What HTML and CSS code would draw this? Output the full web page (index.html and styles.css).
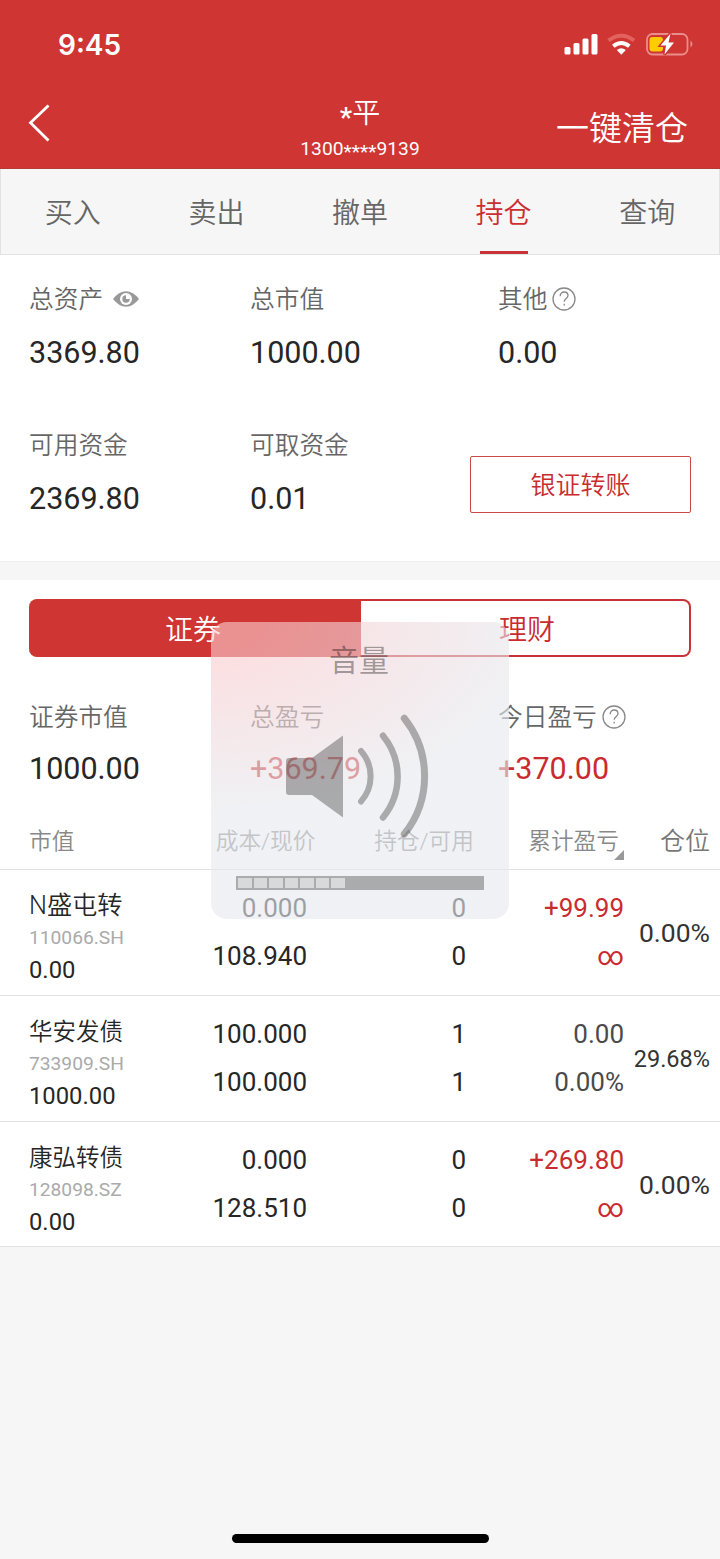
FILE: index.html
```html
<!DOCTYPE html>
<html lang="zh-CN">
<head>
<meta charset="utf-8">
<title>持仓</title>
<link rel="stylesheet" href="styles.css">
</head>
<body>
<div class="screen">
  <header class="top">
    <div class="status">
      <span class="clock">9:45</span>
      <svg class="status-icons" width="130" height="24" viewBox="0 0 130 24">
        <g fill="#fff">
          <rect x="1.5" y="15" width="6" height="7.5" rx="1.5"/><rect x="10.5" y="11" width="6" height="11.500" rx="1.500"/><rect x="19.500" y="6.500" width="6" height="16" rx="1.500"/><rect x="28.500" y="2" width="6" height="20.500" rx="1.500"/>
          <path d="M53.800 18Q58.300 14.700 62.800 18L58.300 22.800Z"/>
        </g>
        <path d="M50.300 14.300Q58.300 7.800 66.300 14.300" fill="none" stroke="#fff" stroke-width="4"/>
        <path d="M45.500 8.500Q58.300-1 71.100 8.500" fill="none" stroke="#e2625d" stroke-width="4"/>
        <rect x="84" y="2" width="40.500" height="20.500" rx="5.500" fill="none" stroke="#e98e8b" stroke-width="1.800"/>
        <path d="M127.500 8.500Q131.500 12 127.500 15.500Z" fill="#e98e8b"/>
        <rect x="86.500" y="5" width="13.500" height="14.500" rx="3" fill="#fc0"/>
        <path d="M107.500 1.500L97.500 13.500H103L101.500 22.500L111 10.500H105.500Z" fill="#fff" stroke="#cf3533" stroke-width="3" paint-order="stroke"/>
      </svg>
    </div>
    <div class="nav">
      <svg class="back" width="24" height="40" viewBox="0 0 24 40"><path d="M20.500 2.500L2.500 19.800L20.500 37.500" fill="none" stroke="#fff" stroke-width="2.800"/></svg>
      <div class="account"><div class="owner"><i>*</i>平</div><div class="number">1300<i>****</i>9139</div></div>
      <div class="clear-all">一键清仓</div>
    </div>
  </header>

  <nav class="tabs">
    <span class="tab">买入</span><span class="tab">卖出</span><span class="tab">撤单</span><span class="tab active">持仓</span><span class="tab">查询</span>
  </nav>

  <section class="assets">
    <div class="stat"><div class="label">总资产
      <svg class="eye" width="26" height="16" viewBox="0 0 26 16"><path d="M0 8Q6 .3 13 .3T26 8Q20 15.700 13 15.700T0 8Z" fill="#999"/><circle cx="13" cy="8" r="6" fill="#fff"/><circle cx="13" cy="8" r="3.700" fill="#999"/><path d="M13 4V8H16.800V4Z" fill="#fff"/></svg></div>
      <div class="value">3369.80</div></div>
    <div class="stat"><div class="label">总市值</div><div class="value">1000.00</div></div>
    <div class="stat"><div class="label">其他
      <svg class="help" width="24" height="24" viewBox="0 0 24 24" fill="none" stroke="#888" stroke-width="1.300"><circle cx="12" cy="12" r="11"/><path d="M8.200 9.200C8.200 6.500 9.800 5 12.100 5S16 6.500 16 8.600C16 11.500 12.200 11.500 12.200 14.800"/><path d="M12.200 16.700V18.500"/></svg></div>
      <div class="value">0.00</div></div>
    <div class="stat"><div class="label">可用资金</div><div class="value">2369.80</div></div>
    <div class="stat"><div class="label">可取资金</div><div class="value">0.01</div></div>
    <div class="transfer">银证转账</div>
  </section>

  <section class="holdings">
    <div class="segments"><span class="segment on">证券</span><span class="segment">理财</span></div>
    <div class="summary">
      <div class="stat"><div class="label">证券市值</div><div class="value">1000.00</div></div>
      <div class="stat"><div class="label">总盈亏</div><div class="value red">+369.79</div></div>
      <div class="stat"><div class="label">今日盈亏
        <svg class="help" width="24" height="24" viewBox="0 0 24 24" fill="none" stroke="#888" stroke-width="1.300"><circle cx="12" cy="12" r="11"/><path d="M8.200 9.200C8.200 6.500 9.800 5 12.100 5S16 6.500 16 8.600C16 11.500 12.200 11.500 12.200 14.800"/><path d="M12.200 16.700V18.500"/></svg></div>
        <div class="value red">+370.00</div></div>
    </div>
    <div class="columns">
      <span class="c-name">市值</span><span class="c-cost">成本/现价</span><span class="c-qty">持仓/可用</span><span class="c-gain">累计盈亏<i class="sort"></i></span><span class="c-share">仓位</span>
    </div>
    <div class="row">
      <div class="security"><div class="name wide">N盛屯转</div><div class="code">110066.SH</div><div class="worth">0.00</div></div>
      <div class="pair"><span>0.000</span><span>108.940</span></div>
      <div class="pair"><span>0</span><span>0</span></div>
      <div class="pair red"><span>+99.99</span><span>∞</span></div>
      <div class="share">0.00%</div>
    </div>
    <div class="row">
      <div class="security"><div class="name">华安发债</div><div class="code">733909.SH</div><div class="worth">1000.00</div></div>
      <div class="pair"><span>100.000</span><span>100.000</span></div>
      <div class="pair"><span>1</span><span>1</span></div>
      <div class="pair flat"><span>0.00</span><span>0.00%</span></div>
      <div class="share small">29.68%</div>
    </div>
    <div class="row">
      <div class="security"><div class="name">康弘转债</div><div class="code">128098.SZ</div><div class="worth">0.00</div></div>
      <div class="pair"><span>0.000</span><span>128.510</span></div>
      <div class="pair"><span>0</span><span>0</span></div>
      <div class="pair red"><span>+269.80</span><span>∞</span></div>
      <div class="share">0.00%</div>
    </div>
  </section>

  <div class="volume">
    <div class="volume-title">音量</div>
    <svg class="speaker" width="146" height="124" viewBox="0 0 146 124">
      <path d="M4 44H27L58 21.500V103.500L27 81H4Q1 81 1 78V47Q1 44 4 44Z" fill="#000"/>
      <g fill="none" stroke="#000" stroke-linecap="round">
        <path d="M76 37A38 38 0 0 1 76 87.500" stroke-width="6"/>
        <path d="M98 21.700A64.500 64.500 0 0 1 98 103.500" stroke-width="6.500"/>
        <path d="M119.300 4.300A92.600 92.600 0 0 1 119.300 120" stroke-width="7"/>
      </g>
    </svg>
    <div class="meter"><i></i><i></i><i></i><i></i><i></i><i></i><i></i></div>
  </div>
  <div class="home-bar"></div>
</div>
</body>
</html>
```
FILE: styles.css
```css
* { box-sizing: border-box; }
body {
  margin: 0;
  background: #f6f6f6;
  color: #262626;
  font-family: Roboto, "Noto Sans CJK SC DemiLight", "Noto Sans CJK SC", sans-serif;
}
i { font-style: normal; }
svg { display: block; flex: none; }
.screen { position: relative; width: 720px; height: 1559px; overflow: hidden; }
.red { color: #c92b2e; }

.top { height: 169px; background: #cf3533; color: #fff; border-bottom: 1px solid #b73a34; }
.status { height: 84px; padding: 32px 27px 0 58px; display: flex; justify-content: space-between; }
.clock { font: 600 28px/26px Inter, sans-serif; }
.nav { display: grid; grid-template-columns: 240px 240px 240px; height: 84px; }
.back { margin: 19px 0 0 28px; }
.account { text-align: center; }
.owner { font-size: 28px; line-height: 36px; padding-top: 12px; font-weight: 350; }
.owner i { font-weight: 500; display: inline-block; transform: translateY(4px); }
.number { font-size: 19.200px; line-height: 24px; padding-top: 5px; }
.number i { display: inline-block; transform: translateY(3px); }
.clear-all { font-size: 33px; line-height: 48px; padding: 21px 32px 0 0; text-align: right; font-weight: 350; }

.tabs { height: 86px; display: flex; border: 1px solid #e2e2e2; border-top: 0; font-size: 28px; font-weight: 350; color: #666; }
.tab { flex: 1; display: flex; justify-content: center; line-height: 90px; position: relative; }
.active { color: #cc2f31; }
.active::after { content: ""; position: absolute; bottom: 0; width: 48px; height: 3px; background: #c93236; }

.assets { height: 307px; padding: 26px 29px 0; background: #fff; border-bottom: 1px solid #eee; display: grid; grid-template-columns: 221px 248px 193px; grid-template-rows: 146px 146px; }
.label { height: 36px; line-height: 37px; display: flex; align-items: flex-start; font-size: 24.700px; font-weight: 350; color: #666; white-space: nowrap; }
.value { font-size: 30.500px; line-height: 38px; margin-top: 17px; }
.eye { margin: 10px 0 0 10px; }
.help { margin: 6px 0 0 5px; }
.transfer { width: 221px; height: 57px; margin: 29px 0 0 -28px; border: 1px solid #c9484a; border-radius: 2px; color: #c92b2e; text-align: center; font-size: 25px; font-weight: 350; line-height: 57px; }

.holdings { margin-top: 18px; background: #fff; }
.segments { height: 77px; padding: 19px 29px 0; display: grid; grid-template-columns: 332px 330px; }
.segment { height: 57.500px; border: 2px solid #c93236; border-left: 0; border-radius: 0 8px 8px 0; color: #c92b2e; font-size: 28px; font-weight: 350; text-align: center; line-height: 59px; padding-left: 4px; }
.on { background: #cf3533; border-color: #cf3533; border-radius: 8px 0 0 8px; color: #fff; padding: 0 2px 0 0; }
.summary { height: 154px; padding: 42px 29px 0; display: grid; grid-template-columns: 221px 248px 193px; }
.summary .value { margin-top: 15px; }
.columns { height: 59px; border-bottom: 1px solid #e2e2e2; display: flex; font-size: 22.700px; font-weight: 350; color: #888; line-height: 62px; white-space: nowrap; padding-left: 29px; }
.c-name { width: 86px; }
.c-cost { width: 200.500px; text-align: right; }
.c-qty { width: 158.500px; text-align: right; }
.c-gain { width: 145px; text-align: right; position: relative; }
.sort { position: absolute; right: -5px; bottom: 9px; border-left: 10px solid transparent; border-bottom: 10px solid #999; }
.c-share { width: 91px; text-align: right; font-size: 25px; color: #777; }
.row { height: 125.800px; background: #fff; border-bottom: 1px solid #e2e2e2; display: grid; grid-template-columns: 150px 128px 159px 158px 86px; padding-left: 29px; }
.security { padding-top: 18px; white-space: nowrap; }
.name { font-size: 23.500px; line-height: 37px; font-weight: 350; height: 34px; }
.wide { font-size: 25.200px; line-height: 35px; }
.code { font-size: 19.200px; line-height: 31px; height: 30px; color: #aaa; }
.worth { font-size: 23.800px; line-height: 36px; }
.pair { padding-top: 14px; display: flex; flex-direction: column; align-items: flex-end; font-size: 26px; line-height: 48px; }
.flat { color: #4a4a4a; }
.share { text-align: right; font-size: 26.500px; line-height: 125px; color: #333; }
.small { font-size: 23.500px; line-height: 126px; }

.volume { position: absolute; left: 211px; top: 622px; width: 298px; height: 297px; border-radius: 16px; background: radial-gradient(ellipse 330px 190px at 0 0, rgba(251, 203, 205, .62) 15%, rgba(240, 217, 221, .62) 55%, rgba(230, 233, 238, .62) 100%); }
.volume-title { text-align: center; font: 30px/44px "Noto Sans CJK SC", sans-serif; color: rgba(0, 0, 0, .36); padding: 14px 2px 0 0; }
.speaker { margin: 34px 0 0 74px; opacity: .29; }
.meter { width: 248px; height: 14px; margin: 38px 0 0 25px; padding: 2px 0 2px 2px; background: rgba(0, 0, 0, .29); display: flex; gap: 2px; }
.meter i { width: 13.500px; background: rgba(255, 255, 255, .55); }
.home-bar { position: absolute; left: 232px; top: 1534px; width: 257px; height: 9px; border-radius: 5px; background: #000; }
```
